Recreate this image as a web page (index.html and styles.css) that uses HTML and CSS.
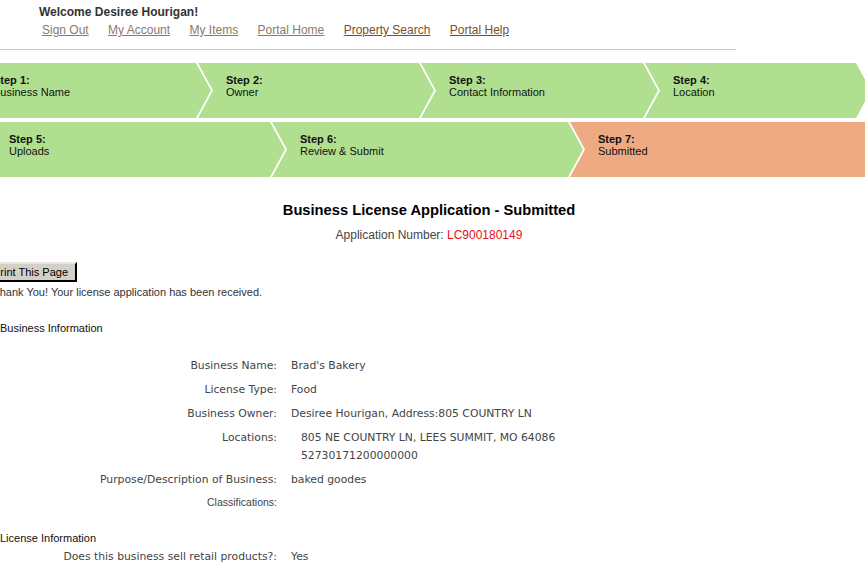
FILE: index.html
```html
<!DOCTYPE html>
<html>
<head>
<meta charset="utf-8">
<link rel="stylesheet" href="styles.css">
</head>
<body>
<div class="header">
  <div class="welcome">Welcome Desiree Hourigan!</div>
  <nav class="nav">
    <a href="#" class="lnk">Sign Out</a>
    <a href="#" class="lnk">My Account</a>
    <a href="#" class="lnk">My Items</a>
    <a href="#" class="lnk">Portal Home</a>
    <a href="#" class="lnk visited">Property Search</a>
    <a href="#" class="lnk visited">Portal Help</a>
  </nav>
</div>
<div class="rule"></div>

<div class="steps">
  <div class="row row1">
    <div class="step s1"><b>Step 1:</b><span>Business Name</span></div>
    <div class="step s2"><b>Step 2:</b><span>Owner</span></div>
    <div class="step s3"><b>Step 3:</b><span>Contact Information</span></div>
    <div class="step s4"><b>Step 4:</b><span>Location</span></div>
  </div>
  <div class="row row2">
    <div class="step s5"><b>Step 5:</b><span>Uploads</span></div>
    <div class="step s6"><b>Step 6:</b><span>Review &amp; Submit</span></div>
    <div class="step s7 current"><b>Step 7:</b><span>Submitted</span></div>
  </div>
</div>

<div class="content">
  <h1 class="title">Business License Application - Submitted</h1>
  <div class="appnum">Application Number: <span class="num">LC900180149</span></div>

  <button class="print">Print This Page</button>
  <div class="thanks">Thank You! Your license application has been received.</div>

  <div class="section">Business Information</div>
  <div class="fields">
    <div class="lbl">Business Name:</div><div class="val">Brad's Bakery</div>
    <div class="lbl">License Type:</div><div class="val">Food</div>
    <div class="lbl">Business Owner:</div><div class="val">Desiree Hourigan, Address:805 COUNTRY LN</div>
    <div class="lbl">Locations:</div><div class="val loc"><div>805 NE COUNTRY LN, LEES SUMMIT, MO 64086</div><div>52730171200000000</div></div>
    <div class="lbl">Purpose/Description of Business:</div><div class="val">baked goodes</div>
    <div class="lbl arial">Classifications:</div><div class="val empty"></div>
  </div>

  <div class="section sec2">License Information</div>
  <div class="fields">
    <div class="lbl">Does this business sell retail products?:</div><div class="val">Yes</div>
  </div>
</div>
</body>
</html>
```

FILE: styles.css
```css
html, body {
  margin: 0;
  padding: 0;
  background: #fff;
  overflow: hidden;
}
body {
  font-family: "Liberation Sans", Arial, sans-serif;
  color: #333;
  width: 865px;
  height: 570px;
}
.header {
  padding: 5px 0 0 39px;
}
.welcome {
  font-weight: bold;
  font-size: 12px;
  line-height: 14px;
  color: #333;
}
.nav {
  display: flex;
  padding-left: 3px;
  margin-top: 4px;
  gap: 19.4px;
  font-size: 12px;
  line-height: 14px;
}
.lnk {
  color: #8c7a6b;
  text-decoration: underline;
}
.lnk.visited {
  color: #7b4f2a;
}
.rule {
  width: 736px;
  height: 1px;
  background: #c8c8c8;
  margin-top: 12px;
}
.steps {
  margin-top: 13px;
  display: flex;
  flex-direction: column;
  gap: 4px;
  width: 865px;
  overflow: hidden;
}
.row {
  display: flex;
  margin-left: -30px;
}
.step {
  flex: none;
  height: 55px;
  box-sizing: border-box;
  background: #b0df8f;
  padding: 11px 0 0 28px;
  font-size: 11px;
  line-height: 12px;
  color: #111;
  display: flex;
  flex-direction: column;
  margin-left: -13px;
  clip-path: polygon(0 0, calc(100% - 15px) 0, 100% 50%, calc(100% - 15px) 100%, 0 100%, 15px 50%);
}
.step b {
  font-weight: bold;
}
.step.current {
  background: #eeaa82;
}
.s1 { margin-left: 0; width: 241px; padding-left: 23px; }
.s2 { width: 236px; }
.s3 { width: 237px; }
.s4 { width: 226px; }
.s5 { margin-left: 0; width: 315px; padding-left: 39px; }
.s6 { width: 311px; }
.s7 { width: 320px; }

.content {
  margin-left: -7px;
  width: 872px;
}
.title {
  text-align: center;
  font-size: 14.7px;
  line-height: 16px;
  font-weight: bold;
  color: #000;
  margin: 25px 0 0;
}
.appnum {
  text-align: center;
  font-size: 12px;
  line-height: 14px;
  color: #444;
  margin-top: 10px;
}
.num {
  color: #e8101e;
}
.print {
  display: block;
  margin: 20px 0 0 -9px;
  height: 20px;
  padding: 0 7px;
  font-family: "Liberation Sans", Arial, sans-serif;
  font-size: 11px;
  color: #000;
  background: #d4d0c8;
  border: 2px outset #e8e6e2;
  border-right-color: #555;
  border-bottom-color: #555;
}
.thanks {
  font-size: 11px;
  line-height: 13px;
  margin-top: 4px;
  color: #333;
}
.section {
  font-size: 11px;
  line-height: 13px;
  color: #111;
  margin: 23px 0 0 7px;
}
.sec2 {
  margin-top: 15px;
}
.fields {
  display: grid;
  grid-template-columns: 284px auto;
  column-gap: 14px;
  margin-top: 24px;
  font-family: "DejaVu Sans", Tahoma, sans-serif;
  font-size: 10.8px;
  color: #444;
}
.sec2 + .fields {
  margin-top: 5px;
}
.lbl {
  text-align: right;
  line-height: 14px;
  margin-bottom: 10px;
}
.val {
  line-height: 14px;
  margin-bottom: 10px;
}
.loc {
  padding-left: 10px;
}
.loc div + div {
  margin-top: 4px;
}
.lbl.arial {
  font-family: "Liberation Sans", Arial, sans-serif;
  font-size: 10.5px;
  line-height: 10px;
}
.val.empty {
  line-height: 10px;
}
```
